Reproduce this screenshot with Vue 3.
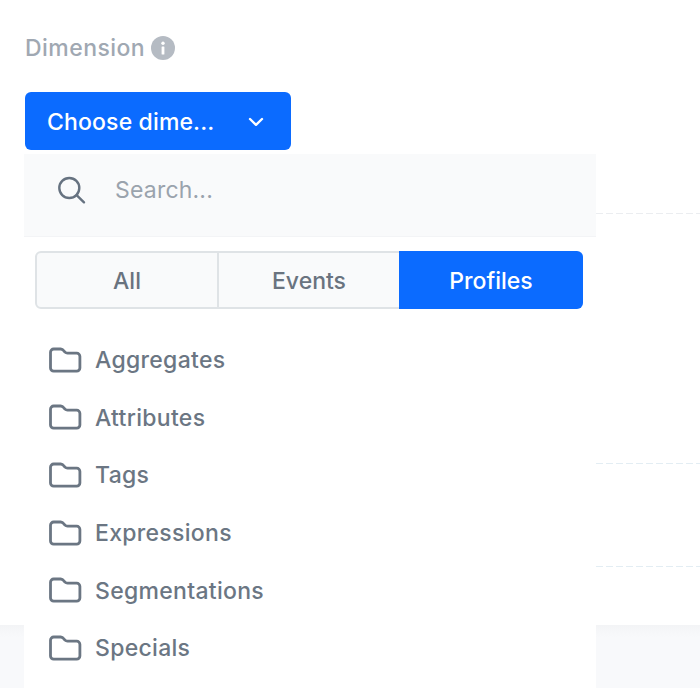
<script setup>
const tabs = [
  { label: 'All', width: 184 },
  { label: 'Events', width: 180, flush: true },
  { label: 'Profiles', width: 184, active: true },
]
const folders = ['Aggregates', 'Attributes', 'Tags', 'Expressions', 'Segmentations', 'Specials']
</script>

<template>
  <div class="page">
    <div class="backdrop">
      <i class="dash" style="top: 213px"></i>
      <i class="dash blue" style="top: 463px"></i>
      <i class="dash blue" style="top: 566px"></i>
      <div class="band"></div>
    </div>

    <div class="content">
      <div class="label">
        <span>Dimension</span>
        <svg class="info" width="24" height="24" viewBox="0 0 24 24">
          <circle cx="12" cy="12" r="12" fill="#b5bbc3" />
          <rect x="10.6" y="10.5" width="2.8" height="8" rx="0.6" fill="#fff" />
          <circle cx="12" cy="7.2" r="1.7" fill="#fff" />
        </svg>
      </div>

      <button class="choose" type="button">
        <span class="nudge">Choose dime...</span>
        <svg width="16" height="16" viewBox="0 0 16 16" fill="none">
          <path d="M2 6 8 11.800l6-5.800" stroke="#fff" stroke-width="2.400" stroke-linecap="round" stroke-linejoin="round" />
        </svg>
      </button>

      <div class="panel">
        <div class="search">
          <svg width="32" height="32" viewBox="0 0 32 32" fill="none">
            <circle cx="14.3" cy="14" r="10" stroke="#667280" stroke-width="2.4" />
            <path d="M21.6 21.2 29 28.3" stroke="#667280" stroke-width="2.4" stroke-linecap="round" />
          </svg>
          <span class="placeholder">Search...</span>
        </div>

        <div class="tabs">
          <div
            v-for="tab in tabs"
            :key="tab.label"
            class="tab"
            :class="{ active: tab.active, flush: tab.flush }"
            :style="{ width: tab.width + 'px' }"
          >{{ tab.label }}</div>
        </div>

        <ul class="list">
          <li v-for="name in folders" :key="name" class="row">
            <svg width="34" height="26" viewBox="0 0 34 26" fill="none">
              <path d="M2.500 5.200C2.500 3.400 3.900 2 5.700 2h6.900c1 0 1.800.4 2.500 1.100l2 2.100c.6.7 1.500 1 2.400 1h9.200c1.800 0 3.200 1.400 3.200 3.200V21c0 1.800-1.400 3.200-3.200 3.200H5.700c-1.800 0-3.200-1.400-3.200-3.200V5.200Z" stroke="#6b7683" stroke-width="2.800" stroke-linejoin="round" />
            </svg>
            <span class="nudge">{{ name }}</span>
          </li>
        </ul>
      </div>
    </div>
  </div>
</template>

<style>
html, body { margin: 0; background: #fff; }
</style>

<style scoped>
.page {
  position: relative;
  width: 700px;
  height: 688px;
  overflow: hidden;
  background: #fff;
  font-family: Inter, "Noto Sans", sans-serif;
}
.backdrop { position: absolute; inset: 0; }
.dash {
  position: absolute;
  left: 596px;
  right: 0;
  height: 1px;
  background: repeating-linear-gradient(90deg, #ebedf0 0 7px, transparent 7px 10px);
}
.dash.blue { background: repeating-linear-gradient(90deg, #e3edf3 0 7px, transparent 7px 10px); }
.band {
  position: absolute;
  left: 0;
  right: 0;
  top: 625px;
  bottom: 0;
  background: linear-gradient(#f3f4f6, #f8f9fb 12px);
}
.content {
  position: relative;
  padding: 34px 0 0 25px;
}
.label {
  display: flex;
  align-items: center;
  gap: 6px;
  height: 28px;
  font-size: 23px;
  font-weight: 500;
  letter-spacing: 0.45px;
  color: #a0a8b2;
}
.choose {
  display: flex;
  align-items: center;
  justify-content: space-between;
  width: 266px;
  height: 58px;
  margin-top: 30px;
  padding: 0 27px 0 22px;
  border: 0;
  border-radius: 6px;
  background: #0b6bff;
  color: #fff;
  font: 500 23px Inter, "Noto Sans", sans-serif;
  letter-spacing: 0.15px;
}
.nudge { padding-top: 1px; }
.panel {
  width: 572px;
  height: 534px;
  margin: 4px 0 0 -1px;
  background: #fff;
}
.search {
  display: flex;
  align-items: center;
  gap: 28px;
  height: 83px;
  box-sizing: border-box;
  padding: 0 0 11px 31px;
  background: #f9fafb;
  border-bottom: 1px solid #f3f4f6;
  font-size: 23px;
  letter-spacing: 0.2px;
  color: #9aa3ad;
}
.tabs {
  display: flex;
  margin: 14px 0 0 11px;
  height: 58px;
}
.tab {
  display: flex;
  align-items: center;
  justify-content: center;
  box-sizing: border-box;
  padding-top: 1px;
  background: #f9fafb;
  border: 2px solid #dfe3e6;
  border-left-width: 0;
  font-size: 23px;
  font-weight: 500;
  color: #69737f;
}
.tab:first-child {
  border-left-width: 2px;
  border-radius: 6px 0 0 6px;
}
.tab.flush { border-right-width: 0; }
.tab.active {
  border: 0;
  border-radius: 0 6px 6px 0;
  background: #0b6bff;
  color: #fff;
}
.list {
  margin: 22px 0 0;
  padding: 0 0 0 24px;
  list-style: none;
}
.row {
  display: flex;
  align-items: center;
  gap: 13px;
  height: 57.6px;
  font-size: 23px;
  font-weight: 500;
  letter-spacing: 0.3px;
  color: #6b7683;
}
</style>
